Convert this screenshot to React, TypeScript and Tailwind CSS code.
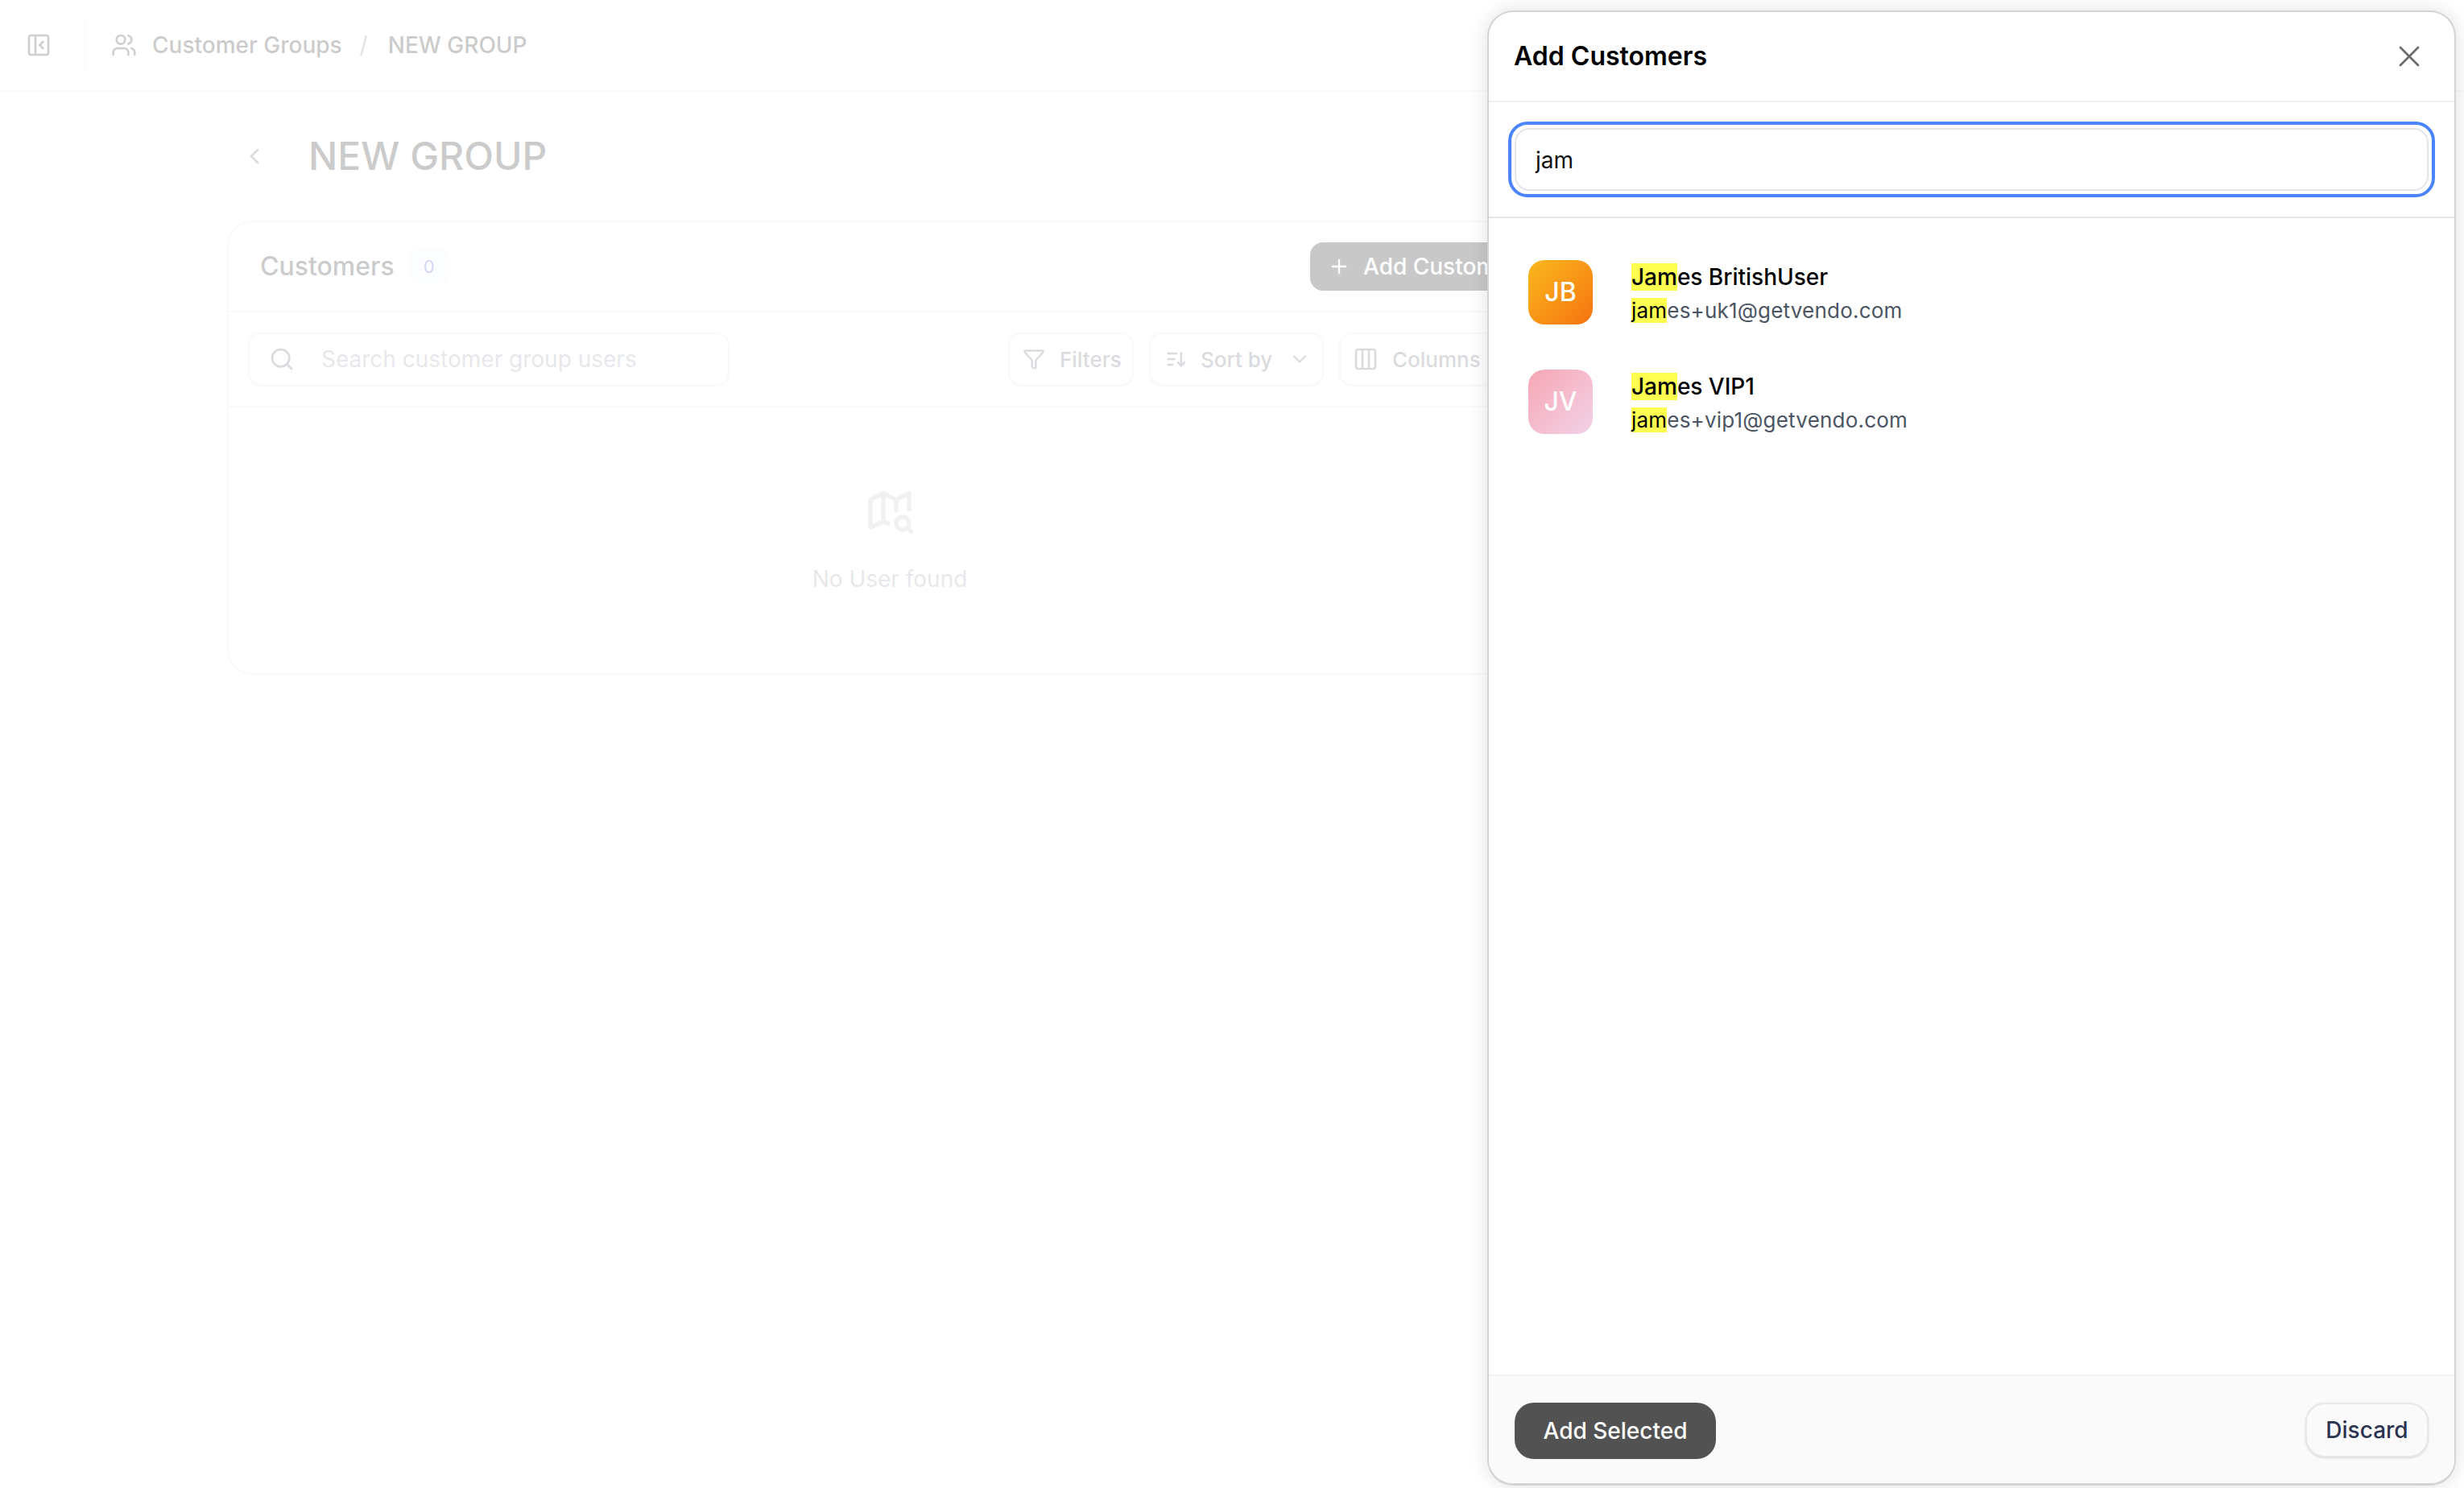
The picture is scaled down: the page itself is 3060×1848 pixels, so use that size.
import { ChevronDown, ChevronLeft, Columns3, Filter, PanelLeftClose, Plus, Search, Users, X } from "lucide-react";
import { TbMapSearch } from "react-icons/tb";

const results = [
  {
    initials: "JB",
    nameRest: "es BritishUser",
    emailRest: "es+uk1@getvendo.com",
    avatar: "bg-gradient-to-br from-[#f9b81e] to-[#f5720f]",
  },
  {
    initials: "JV",
    nameRest: "es VIP1",
    emailRest: "es+vip1@getvendo.com",
    avatar: "bg-gradient-to-br from-[#f6a6b4] to-[#f2d2e8]",
  },
];

const SortIcon = () => (
  <svg width="28" height="28" viewBox="0 0 24 24" fill="none" stroke="currentColor" strokeWidth="2" strokeLinecap="round" strokeLinejoin="round">
    <path d="M3 6h9" />
    <path d="M3 12h7" />
    <path d="M3 18h5" />
    <path d="M17 5v14" />
    <path d="m13.5 15.5 3.5 3.5 3.5-3.5" />
  </svg>
);

const ToolButton = ({ children, className }: { children: React.ReactNode; className: string }) => (
  <button className={`flex h-[66px] shrink-0 items-center rounded-[16px] border-2 border-[#e8e8ec] bg-white text-[26px] font-medium text-[#6b7280] shadow-sm ${className}`}>
    {children}
  </button>
);

const CustomerRow = ({ item }: { item: (typeof results)[number] }) => (
  <div className="flex h-[84px] items-center gap-[48px]">
    <div className={`flex h-[80px] w-[80px] items-center justify-center rounded-[20px] text-[32px] font-medium text-white ${item.avatar}`}>
      {item.initials}
    </div>
    <div className="flex flex-col pt-[4px]">
      <div className="text-[28px] leading-[42px] font-medium text-black">
        <mark className="bg-[#ffff50] text-black">Jam</mark>
        {item.nameRest}
      </div>
      <div className="text-[26px] leading-[42px] tracking-[0.2px] text-[#4b5563]">
        <mark className="bg-[#ffff50] text-black">jam</mark>
        {item.emailRest}
      </div>
    </div>
  </div>
);

export default function App() {
  return (
    <div className="relative h-[1848px] w-[3060px] overflow-hidden bg-white font-['Inter','Noto_Sans',sans-serif]">
      {/* Page under the overlay */}
      <header className="flex h-[114px] items-center border-b-2 border-[#e8e8e8] pl-[32px]">
        <PanelLeftClose size={32} strokeWidth={2} className="text-[#404040]" />
        <div className="mr-[31px] ml-[41px] h-[64px] w-[2px] bg-[#f0f0f0]" />
        <Users size={32} strokeWidth={2} className="text-[#404040]" />
        <span className="ml-[19px] text-[28px] font-medium text-[#333333]">Customer Groups</span>
        <span className="mr-[25px] ml-[22px] text-[28px] text-[#8b8b8b]">/</span>
        <span className="text-[28px] font-medium text-[#333333]">NEW GROUP</span>
      </header>

      <main className="pl-[282px]">
        <div className="flex h-[160px] items-center">
          <ChevronLeft size={32} strokeWidth={2} className="ml-[18px] text-[#6b7280]" />
          <h1 className="ml-[51px] text-[48px] font-medium text-[#333333]">NEW GROUP</h1>
        </div>

        <section className="h-[564px] w-[1646px] rounded-[32px] border-2 border-[#e8e8e8]">
          <div className="flex h-[112px] items-center justify-between border-b-2 border-[#e8e8e8] pr-[24px] pl-[39px]">
            <div className="flex items-center gap-[18px]">
              <span className="text-[32px] font-medium text-[#333333]">Customers</span>
              <span className="flex h-[44px] w-[50px] items-center justify-center rounded-[12px] bg-[#f2f5ff] text-[22px] text-[#4f5fc4]">0</span>
            </div>
            <button className="flex h-[60px] w-[275px] items-center gap-[16px] rounded-[16px] bg-[#262626] pl-[22px] text-[28px] font-medium text-white">
              <Plus size={28} strokeWidth={2} />
              Add Customers
            </button>
          </div>

          <div className="flex h-[118px] items-center border-b-2 border-[#e8e8e8] px-[24px]">
            <div className="flex h-[66px] w-[598px] items-center rounded-[16px] border-2 border-[#e8e8ec] pl-[24px] text-[#6b7280] shadow-sm">
              <Search size={32} strokeWidth={2} className="shrink-0" />
              <span className="ml-[33px] text-[28px] text-[#9ca3af]">Search customer group users</span>
            </div>
            <div className="ml-[346px] flex gap-[19px]">
              <ToolButton className="w-[156px] gap-[18px] pl-[16px]">
                <Filter size={28} strokeWidth={2} />
                Filters
              </ToolButton>
              <ToolButton className="w-[217px] gap-[16px] pl-[18px]">
                <SortIcon />
                Sort by
                <ChevronDown size={28} strokeWidth={2} className="ml-[4px]" />
              </ToolButton>
              <ToolButton className="w-[195px] gap-[17px] pl-[15px]">
                <Columns3 size={32} strokeWidth={2} />
                Columns
              </ToolButton>
            </div>
          </div>

          <div className="flex flex-col items-center pt-[96px]">
            <TbMapSearch size={64} strokeWidth={2} className="text-[#c4c7cc]" />
            <span className="mt-[32px] text-[28px] text-[#9ca3af]">No User found</span>
          </div>
        </section>
      </main>

      <div className="absolute inset-0 bg-white/75" />

      {/* Add customers drawer */}
      <aside className="absolute top-[13px] left-[1847px] flex h-[1832px] w-[1203px] flex-col overflow-hidden rounded-[32px] border-2 border-b-[3px] border-[#d4d4d4] bg-white shadow-[0_0_24px_rgba(0,0,0,0.12)]">
        <div className="flex h-[112px] shrink-0 items-center justify-between border-b-2 border-[#f0f0f2] pr-[34px] pl-[31px]">
          <h2 className="text-[32px] font-semibold text-black">Add Customers</h2>
          <X size={44} strokeWidth={1.5} className="text-[#6b6b6b]" />
        </div>

        <div className="flex h-[144px] shrink-0 items-center justify-center border-b-2 border-[#e5e5eb]">
          <div className="flex h-[94px] w-[1151px] items-center rounded-[24px] border-[4px] border-[#4a84ff] p-[4px]">
            <div className="flex h-full w-full items-center rounded-[18px] border-2 border-[#e5e5eb] pt-[2px] pl-[24px] text-[28px] text-[#111111]">
              jam
            </div>
          </div>
        </div>

        <div className="flex flex-1 flex-col gap-[52px] pt-[50px] pl-[49px]">
          {results.map((item) => (
            <CustomerRow key={item.initials} item={item} />
          ))}
        </div>

        <div className="flex h-[135px] shrink-0 items-start justify-between border-t-2 border-[#f3f3f3] bg-[#fafafa] pt-[33px] pr-[32px] pl-[32px]">
          <button className="flex h-[70px] w-[250px] items-center justify-center rounded-[24px] bg-[#525252] text-[28px] font-medium text-white">
            Add Selected
          </button>
          <button className="flex h-[68px] w-[153px] items-center justify-center rounded-[24px] border-2 border-[#e6e6ec] bg-[#fafafa] text-[28px] font-medium text-[#2b3350] shadow-sm">
            Discard
          </button>
        </div>
      </aside>
    </div>
  );
}
